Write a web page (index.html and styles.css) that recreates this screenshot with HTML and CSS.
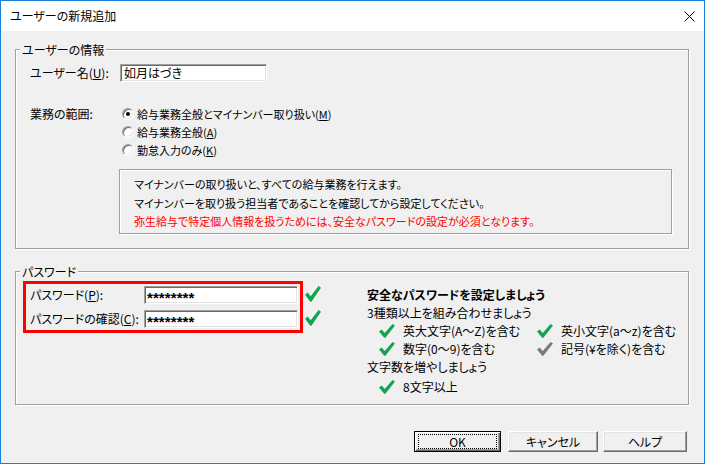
FILE: index.html
```html
<!DOCTYPE html>
<html lang="ja">
<head>
<meta charset="utf-8">
<title>ユーザーの新規追加</title>
<link rel="stylesheet" href="styles.css">
</head>
<body>
<div class="window">
  <div class="titlebar">
    <span class="title">ユーザーの新規追加</span>
    <svg class="close" viewBox="0 0 11 11" width="11" height="11"><path d="M0.5 0.5 L10.5 10.5 M10.5 0.5 L0.5 10.5" stroke="#000" stroke-width="1" fill="none"/></svg>
  </div>

  <fieldset class="group group-user">
    <legend>ユーザーの情報</legend>
    <div class="group-body user-body">
      <div class="field-row">
        <span class="label">ユーザー名(<u>U</u>):</span>
        <div class="textbox name-box">如月はづき</div>
      </div>
      <div class="scope-row">
        <span class="label scope-label">業務の範囲:</span>
        <div class="radios">
          <div class="radio"><span class="radio-mark checked"></span><span>給与業務全般とマイナンバー取り扱い(<u>M</u>)</span></div>
          <div class="radio"><span class="radio-mark"></span><span>給与業務全般(<u>A</u>)</span></div>
          <div class="radio"><span class="radio-mark"></span><span>勤怠入力のみ(<u>K</u>)</span></div>
        </div>
      </div>
      <div class="info">
        <div>マイナンバーの取り扱いと、すべての給与業務を行えます。</div>
        <div>マイナンバーを取り扱う担当者であることを確認してから設定してください。</div>
        <div class="warn">弥生給与で特定個人情報を扱うためには、安全なパスワードの設定が必須となります。</div>
      </div>
    </div>
  </fieldset>

  <fieldset class="group group-pw">
    <legend>パスワード</legend>
    <div class="group-body pw-body">
      <div class="pw-box">
        <div class="pw-row">
          <span class="pw-label">パスワード(<u>P</u>):</span>
          <div class="textbox pw-input"><span class="stars">********</span></div>
        </div>
        <div class="pw-row">
          <span class="pw-label">パスワードの確認(<u>C</u>):</span>
          <div class="textbox pw-input"><span class="stars">********</span></div>
        </div>
      </div>
      <div class="pw-checks">
        <svg class="check big" viewBox="0 0 16 14" preserveAspectRatio="none"><path d="M0 7.6 L2.7 5.6 L5.7 9 L13.6 0 L16 1.5 L6.4 13.8 L5.2 13.8 Z" fill="#12a550"/></svg>
        <svg class="check big" viewBox="0 0 16 14" preserveAspectRatio="none"><path d="M0 7.6 L2.7 5.6 L5.7 9 L13.6 0 L16 1.5 L6.4 13.8 L5.2 13.8 Z" fill="#12a550"/></svg>
      </div>
      <div class="advice">
        <div class="line bold">安全なパスワードを設定しましょう</div>
        <div class="line">3種類以上を組み合わせましょう</div>
        <div class="req-grid">
          <div class="req"><svg class="check" viewBox="0 0 16 14"><path d="M0 7.6 L2.7 5.6 L5.7 9 L13.6 0 L16 1.5 L6.4 13.8 L5.2 13.8 Z" fill="#12a550"/></svg><span>英大文字(A～Z)を含む</span></div>
          <div class="req"><svg class="check" viewBox="0 0 16 14"><path d="M0 7.6 L2.7 5.6 L5.7 9 L13.6 0 L16 1.5 L6.4 13.8 L5.2 13.8 Z" fill="#12a550"/></svg><span>英小文字(a～z)を含む</span></div>
          <div class="req"><svg class="check" viewBox="0 0 16 14"><path d="M0 7.6 L2.7 5.6 L5.7 9 L13.6 0 L16 1.5 L6.4 13.8 L5.2 13.8 Z" fill="#12a550"/></svg><span>数字(0～9)を含む</span></div>
          <div class="req"><svg class="check" viewBox="0 0 16 14"><path d="M0 7.6 L2.7 5.6 L5.7 9 L13.6 0 L16 1.5 L6.4 13.8 L5.2 13.8 Z" fill="#7a7a7a"/></svg><span>記号(¥を除く)を含む</span></div>
        </div>
        <div class="line">文字数を増やしましょう</div>
        <div class="req-grid single">
          <div class="req"><svg class="check" viewBox="0 0 16 14"><path d="M0 7.6 L2.7 5.6 L5.7 9 L13.6 0 L16 1.5 L6.4 13.8 L5.2 13.8 Z" fill="#12a550"/></svg><span>8文字以上</span></div>
        </div>
      </div>
    </div>
  </fieldset>

  <div class="buttons">
    <button class="btn btn-ok" type="button">OK</button>
    <button class="btn btn-cancel" type="button">キャンセル</button>
    <button class="btn btn-help" type="button">ヘルプ</button>
  </div>
</div>
</body>
</html>
```

FILE: styles.css
```css
* { box-sizing: border-box; }
html, body { margin: 0; padding: 0; background: #ffffff; }
body {
  font-family: "Noto Sans CJK JP", "Noto Sans", sans-serif;
  font-size: 12px;
  color: #000;
  font-feature-settings: "palt";
}
u { text-decoration: underline; text-underline-offset: 1px; }

.window {
  width: 705px;
  height: 464px;
  border: 1px solid #1a7fd6;
  background: #f0f0f0;
  display: flex;
  flex-direction: column;
}

.titlebar {
  flex: none;
  height: 30px;
  background: #ffffff;
  display: flex;
  align-items: center;
  justify-content: space-between;
  padding: 0 9px 0 9px;
}
.title { line-height: 16px; font-size: 12px; }
.close { width: 11px; height: 11px; display: block; }

.group {
  margin: 0 0 0 14px;
  padding: 0;
  width: 674px;
  min-width: 0;
  border: 1px solid #a0a0a0;
  box-shadow: 1px 1px 0 #ffffff, inset 1px 1px 0 #ffffff;
}
.group legend {
  margin-left: 4px;
  padding: 0 2px;
  line-height: 17px;
  background: #f0f0f0;
}
.group-user { margin-top: 10px; }
.group-pw { margin-top: 14px; }

.user-body { padding: 6px 0 14px 14px; }

.field-row { display: flex; align-items: center; height: 18px; }
.label { width: 90px; line-height: 18px; flex: none; }

.textbox {
  background: #ffffff;
  border: 1px solid;
  border-color: #a0a0a0 #ffffff #ffffff #a0a0a0;
  box-shadow: inset 1px 1px 0 #696969, inset -1px -1px 0 #e3e3e3;
  height: 18px;
  line-height: 16px;
  padding-left: 3px;
}
.name-box { width: 147px; }

.scope-row { display: flex; align-items: flex-start; margin-top: 23px; }
.scope-label { width: 92px; }
.radios { display: flex; flex-direction: column; font-size: 11px; }
.radio { display: flex; align-items: center; height: 18px; line-height: 18px; }
.radio-mark {
  width: 12px;
  height: 12px;
  border-radius: 50%;
  background: #ffffff;
  border: 1px solid;
  border-color: #a0a0a0 #ffffff #ffffff #a0a0a0;
  box-shadow: inset 1px 1px 0 #696969, inset -1px -1px 0 #e3e3e3;
  margin-right: 3px;
  display: flex;
  align-items: center;
  justify-content: center;
  flex: none;
}
.radio-mark.checked::before {
  content: "";
  width: 4px;
  height: 4px;
  border-radius: 50%;
  background: #000;
}

.info {
  margin: 10px 0 0 89px;
  width: 553px;
  height: 65px;
  border: 1px solid #a0a0a0;
  box-shadow: 1px 1px 0 #ffffff, inset 1px 1px 0 #ffffff;
  padding: 5px 0 0 14px;
  font-size: 11px;
  line-height: 18.5px;
}
.warn { color: #ff0000; }

.pw-body { display: flex; align-items: flex-start; padding: 1px 0 8px 7px; }
.pw-box {
  width: 280px;
  border: 3px solid #ff0000;
  padding: 2px 2px 2px 4px;
  display: flex;
  flex-direction: column;
  gap: 6px;
}
.pw-row { display: flex; align-items: center; height: 18px; }
.pw-label { width: 114px; line-height: 18px; flex: none; }
.pw-input { width: 154px; padding-left: 2px; }
.stars {
  display: inline-block;
  font-family: "Liberation Sans", Arial, sans-serif;
  font-weight: bold;
  font-size: 15px;
  line-height: 16px;
  letter-spacing: 0.1px;
  position: relative;
  top: 3px;
}

.pw-checks {
  margin-left: 2px;
  padding-top: 5px;
  display: flex;
  flex-direction: column;
  gap: 8px;
}
.check { width: 16px; height: 14px; display: block; flex: none; }
.check.big { height: 16px; }

.advice { margin-left: 46px; margin-top: 5px; }
.line { line-height: 18px; height: 18px; }
.bold { font-weight: bold; }
.req-grid {
  display: grid;
  grid-template-columns: 158px auto;
  padding-left: 12px;
}
.req-grid.single { margin-top: 2px; }
.req { display: flex; align-items: center; gap: 8px; height: 18px; line-height: 18px; }

.buttons {
  display: flex;
  justify-content: flex-end;
  margin: 26px 17px 0 0;
}
.btn {
  height: 21px;
  padding: 0;
  font-family: "Noto Sans CJK JP", "Noto Sans", sans-serif;
  font-size: 12px;
  line-height: 17px;
  color: #000;
  background: #f0f0f0;
  border: 1px solid;
  border-color: #ffffff #696969 #696969 #ffffff;
  box-shadow: inset -1px -1px 0 #a0a0a0, inset 1px 1px 0 #e3e3e3;
  font-feature-settings: "palt";
}
.btn-ok {
  position: relative;
  width: 87px;
  border-color: #000;
  box-shadow: inset 1px 1px 0 #ffffff, inset -1px -1px 0 #696969, inset -2px -2px 0 #a0a0a0;
}
.btn-ok::after {
  content: "";
  position: absolute;
  left: 3px;
  top: 2px;
  right: 3px;
  bottom: 2px;
  border: 1px dotted #000;
}
.btn-cancel { width: 90px; margin-left: 7px; }
.btn-help { width: 84px; margin-left: 5px; }
```
